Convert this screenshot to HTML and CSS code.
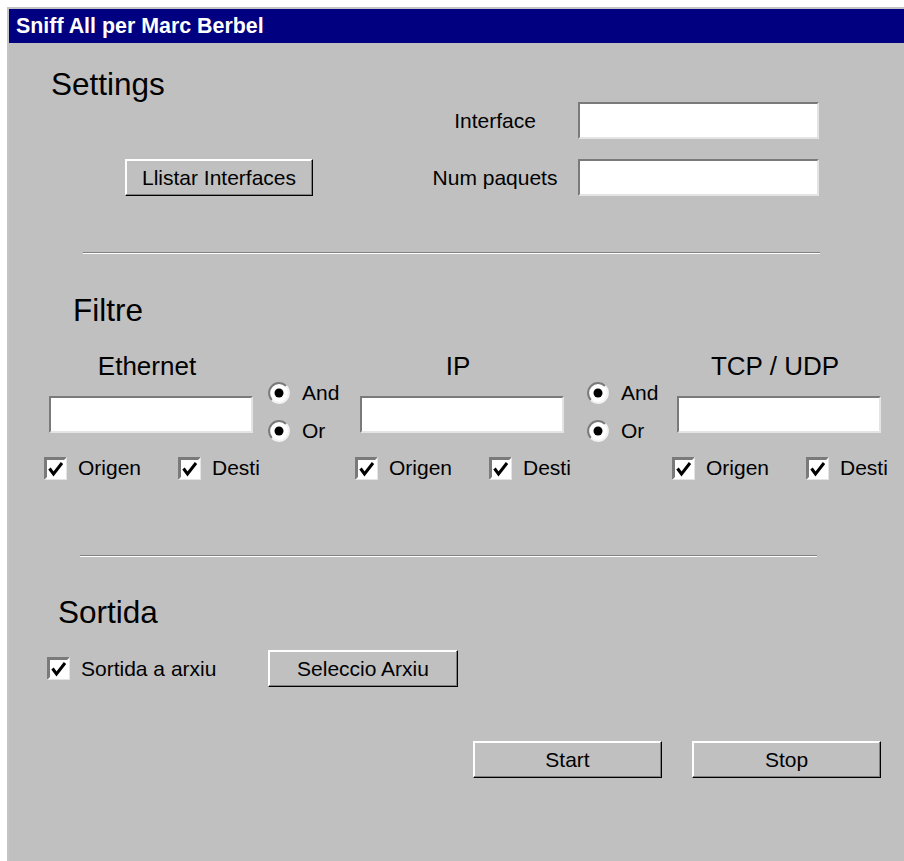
FILE: index.html
```html
<!DOCTYPE html>
<html lang="ca">
<head>
<meta charset="utf-8">
<title>Sniff All per Marc Berbel</title>
<link rel="stylesheet" href="styles.css">
</head>
<body>
<svg class="defs" width="0" height="0" aria-hidden="true">
  <defs>
    <symbol id="chk" viewBox="0 0 23 23">
      <rect width="23" height="23" fill="#fff"/>
      <path d="M0 0H23L20 3H3V20L0 23Z" fill="#7a7a7a"/>
      <path d="M23 0V23H0L1 22H22V1Z" fill="#e4e4e4"/>
      <path d="M5.5 11.5L9.5 17L18 6" fill="none" stroke="#000" stroke-width="3"/>
    </symbol>
    <symbol id="rad" viewBox="0 0 22 22">
      <circle cx="11" cy="11" r="10" fill="#fff"/>
      <path d="M3.93 18.07A10 10 0 0 1 18.07 3.93" fill="none" stroke="#7a7a7a" stroke-width="2"/>
      <path d="M18.07 3.93A10 10 0 0 1 3.93 18.07" fill="none" stroke="#f2f2f2" stroke-width="2"/>
      <circle cx="11" cy="11" r="4.5" fill="#000"/>
    </symbol>
  </defs>
</svg>

<div class="window">
  <div class="titlebar">Sniff All per Marc Berbel</div>

  <div class="client">
    <h2 class="section-title settings-title">Settings</h2>
    <div class="settings-grid">
      <span class="field-label r1">Interface</span>
      <input class="field wide r1" type="text">
      <button class="btn btn-list" type="button">Llistar Interfaces</button>
      <span class="field-label r2">Num paquets</span>
      <input class="field wide r2" type="text">
    </div>

    <div class="separator sep-1"></div>

    <h2 class="section-title filtre-title">Filtre</h2>
    <div class="filter-grid">
      <div class="filter-group">
        <div class="group-label">Ethernet</div>
        <input class="field" type="text">
        <div class="check-row">
          <span class="check"><svg class="check-box"><use href="#chk"/></svg>Origen</span>
          <span class="check"><svg class="check-box"><use href="#chk"/></svg>Desti</span>
        </div>
      </div>
      <div class="radio-group first">
        <span class="radio"><svg class="radio-dot"><use href="#rad"/></svg>And</span>
        <span class="radio"><svg class="radio-dot"><use href="#rad"/></svg>Or</span>
      </div>
      <div class="filter-group">
        <div class="group-label">IP</div>
        <input class="field" type="text">
        <div class="check-row">
          <span class="check"><svg class="check-box"><use href="#chk"/></svg>Origen</span>
          <span class="check"><svg class="check-box"><use href="#chk"/></svg>Desti</span>
        </div>
      </div>
      <div class="radio-group second">
        <span class="radio"><svg class="radio-dot"><use href="#rad"/></svg>And</span>
        <span class="radio"><svg class="radio-dot"><use href="#rad"/></svg>Or</span>
      </div>
      <div class="filter-group">
        <div class="group-label">TCP / UDP</div>
        <input class="field" type="text">
        <div class="check-row">
          <span class="check"><svg class="check-box"><use href="#chk"/></svg>Origen</span>
          <span class="check"><svg class="check-box"><use href="#chk"/></svg>Desti</span>
        </div>
      </div>
    </div>

    <div class="separator sep-2"></div>

    <h2 class="section-title sortida-title">Sortida</h2>
    <div class="sortida-row">
      <span class="check file-check"><svg class="check-box"><use href="#chk"/></svg>Sortida a arxiu</span>
      <button class="btn btn-file" type="button">Seleccio Arxiu</button>
    </div>

    <div class="action-row">
      <button class="btn btn-action" type="button">Start</button>
      <button class="btn btn-action" type="button">Stop</button>
    </div>
  </div>
</div>
</body>
</html>
```

FILE: styles.css
```css
html, body {
  margin: 0;
  padding: 0;
  background: #fff;
  overflow: hidden;
}

body {
  font-family: "Liberation Sans", Arial, Helvetica, sans-serif;
  color: #000;
}

.defs {
  position: absolute;
  width: 0;
  height: 0;
}

/* Frame */
.window {
  box-sizing: border-box;
  width: 897px;
  height: 854px;
  margin: 7px 0 0 7px;
  border-top: 2px solid #c4c4c4;
  border-left: 2px solid #c4c4c4;
  background: #c0c0c0;
  display: flex;
  flex-direction: column;
}

.titlebar {
  height: 34px;
  line-height: 34px;
  background: #000080;
  color: #fff;
  font-weight: bold;
  font-size: 21.4px;
  padding-left: 7px;
  white-space: nowrap;
}

.client {
  display: flex;
  flex-direction: column;
  align-items: flex-start;
}

.section-title {
  margin: 0;
  font-weight: normal;
  font-size: 31.5px;
  line-height: 36px;
}

/* Widgets */
.field {
  box-sizing: border-box;
  width: 204px;
  height: 37px;
  margin: 0;
  padding: 0 4px;
  background: #fff;
  border: 2px solid;
  border-color: #7a7a7a #e4e4e4 #e4e4e4 #7a7a7a;
  font: 21px "Liberation Sans", Arial, sans-serif;
  outline: none;
}

.field.wide {
  width: 241px;
}

.btn {
  box-sizing: border-box;
  height: 37px;
  margin: 0;
  padding: 0;
  background: #c0c0c0;
  border: 1px solid;
  border-color: #fff #000 #000 #fff;
  box-shadow: inset -1px -1px #808080, inset 1px 1px #fff;
  font: 21px "Liberation Sans", Arial, sans-serif;
  color: #000;
}

.check {
  display: flex;
  flex: none;
  align-items: center;
  gap: 11px;
  font-size: 21px;
  white-space: nowrap;
}

.check-box {
  width: 23px;
  height: 23px;
  flex: none;
}

.radio {
  display: flex;
  align-items: center;
  gap: 12px;
  height: 26px;
  font-size: 21px;
}

.radio-dot {
  width: 22px;
  height: 22px;
  flex: none;
}

.separator {
  width: 737px;
  height: 0;
  border-top: 1px solid #808080;
  border-bottom: 1px solid #fff;
}

/* Settings */
.settings-title {
  margin: 23px 0 0 42px;
}

.settings-grid {
  margin-left: 116px;
  display: grid;
  grid-template-columns: 287px 166px 241px;
  grid-template-rows: 37px 37px;
  row-gap: 20px;
  align-items: center;
}

.field-label {
  font-size: 21px;
  justify-self: center;
  grid-column: 2;
}

.field-label.r1, .field.r1 { grid-row: 1; }
.field-label.r2, .field.r2 { grid-row: 2; }
.field.wide { grid-column: 3; }

.btn-list {
  grid-column: 1;
  grid-row: 2;
  width: 188px;
}

.sep-1 {
  margin: 56px 0 0 74px;
}

/* Filtre */
.filtre-title {
  margin: 38px 0 0 64px;
}

.filter-grid {
  margin: 23px 0 0 40px;
  display: grid;
  grid-template-columns: 204px 107px 204px 113px 204px;
  align-items: start;
}

.filter-group {
  display: flex;
  flex-direction: column;
}

.group-label {
  font-size: 26px;
  line-height: 30px;
  text-align: center;
  padding-right: 8px;
}

.filter-group .field {
  margin-top: 15px;
}

.check-row {
  display: flex;
  align-items: center;
  height: 24px;
  margin: 23px 0 0 -5px;
}

.check-row .check:first-child {
  width: 134px;
}

.radio-group {
  display: flex;
  flex-direction: column;
  gap: 12px;
  padding-top: 29px;
}

.radio-group.first { padding-left: 15px; }
.radio-group.second { padding-left: 23px; }

.sep-2 {
  margin: 75px 0 0 71px;
}

/* Sortida */
.sortida-title {
  margin: 37px 0 0 49px;
}

.sortida-row {
  display: flex;
  align-items: center;
  margin: 20px 0 0 38px;
}

.file-check {
  width: 221px;
}

.btn-file {
  width: 190px;
}

.action-row {
  align-self: stretch;
  display: flex;
  justify-content: flex-end;
  gap: 30px;
  margin-top: 54px;
  padding-right: 23px;
}

.btn-action {
  width: 189px;
}
```
